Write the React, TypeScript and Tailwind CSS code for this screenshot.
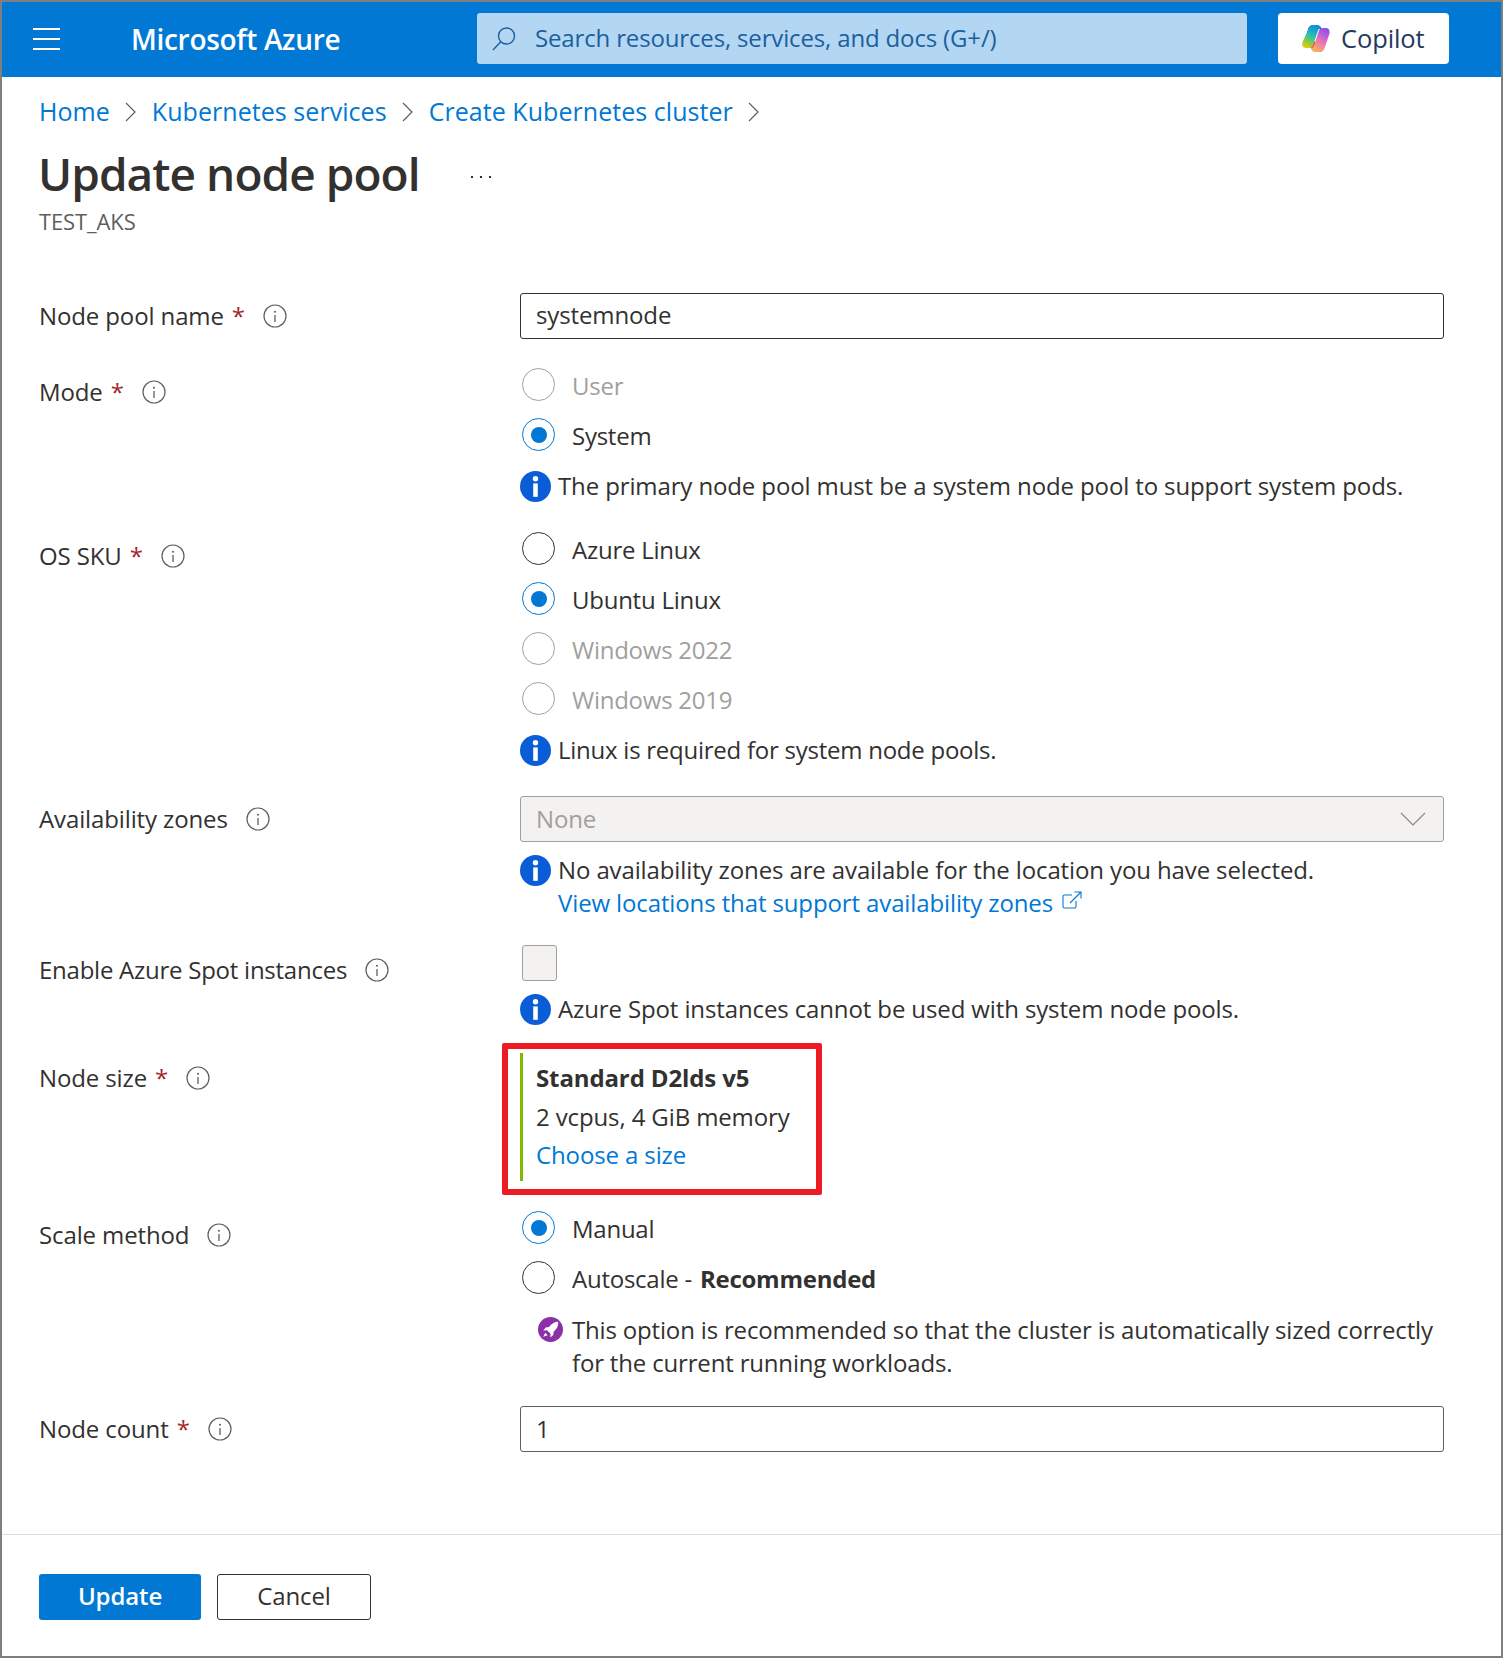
import type { ReactNode } from "react";

function Radio({ label, checked, disabled }: { label: ReactNode; checked?: boolean; disabled?: boolean }) {
  const ring = checked ? "border-[#0078d4]" : disabled ? "border-[#a19f9d]" : "border-[#323130]";
  return (
    <div className={`flex h-[50px] items-center tracking-[-0.25px] ${disabled ? "text-[#a19f9d]" : ""}`}>
      <span className={`ml-[2px] mb-[3px] flex h-[33px] w-[33px] items-center justify-center rounded-full border ${ring}`}>
        {checked && <span className="h-4 w-4 rounded-full bg-[#0078d4]" />}
      </span>
      <span className="ml-[17px]">{label}</span>
    </div>
  );
}

function InfoIcon() {
  return (
    <svg viewBox="0 0 30 30" className="h-[31px] w-[31px] shrink-0">
      <circle cx="15" cy="15" r="15" fill="#0b5cd7" />
      <circle cx="15" cy="7.500" r="2.600" fill="#fff" />
      <rect x="12.800" y="12" width="4.400" height="13" fill="#fff" />
    </svg>
  );
}

function InfoLine({ children }: { children: ReactNode }) {
  return (
    <div className="flex leading-[33px]">
      <span className="flex h-[33px] w-[38px] shrink-0 items-center">
        <InfoIcon />
      </span>
      <div className="-mt-px">{children}</div>
    </div>
  );
}

function Label({ text, required, className = "" }: { text: string; required?: boolean; className?: string }) {
  return (
    <div className={`flex h-[46px] items-center ${className}`}>
      <span>{text}</span>
      {required && <span className="ml-2 text-[#a4262c]">*</span>}
      <svg viewBox="0 0 24 24" className="ml-[18px] h-6 w-6 text-[#605e5c]" fill="none" stroke="currentColor">
        <circle cx="12" cy="12" r="11" strokeWidth="1.2" />
        <circle cx="12" cy="7.800" r="1" fill="currentColor" stroke="none" />
        <path d="M12 11v7" strokeWidth="1.3" />
      </svg>
    </div>
  );
}

function Chevron() {
  return (
    <svg viewBox="0 0 14 24" className="mx-[14px] h-6 w-[14px] text-[#605e5c]" fill="none" stroke="currentColor" strokeWidth="1.2">
      <path d="M2 3l9 9-9 9" />
    </svg>
  );
}

function CopilotLogo() {
  return (
    <svg viewBox="0 0 28 27" className="h-[27px] w-[28px]">
      <defs>
        <linearGradient id="cpA" x1="0.6" y1="0" x2="0.2" y2="1">
          <stop offset="0" stopColor="#0f8fe0" />
          <stop offset="0.45" stopColor="#2bc0b0" />
          <stop offset="0.75" stopColor="#8fce3a" />
          <stop offset="1" stopColor="#f2c811" />
        </linearGradient>
        <linearGradient id="cpB" x1="0.7" y1="0" x2="0.3" y2="1">
          <stop offset="0" stopColor="#8c4fe8" />
          <stop offset="0.5" stopColor="#e66fc0" />
          <stop offset="1" stopColor="#fbb25a" />
        </linearGradient>
      </defs>
      <path d="M8 21c1.500 3 3 6 6 6h3c3 0 4.500-1.500 5-4l-3 1c-3 .5-4-1-5-4l-2-5z" fill="#e8452f" />
      <path d="M20 5c-1-3-2.500-5-5.500-5h-3C8.500 0 7 1.500 6 4L4 14l8-2 2-7c.5-1 1.500-1.500 3-1.500z" fill="#1d4fc4" />
      <path d="M12 0C8.500 0 7 1.500 6 5L1 16c-2 4-.5 7 3 7h3c2.500 0 3.500-1 4.500-4l4-12c.8-2.500 1.800-4 3.500-4.500C18.500 1 16 0 14 0z" fill="url(#cpA)" />
      <path d="M17 27c3 0 5-1.500 6-5l4-12c1.500-4 0-7-3-7h-3c-2.500 0-3.500 1-4.500 4l-4 12c-.8 2.500-1.800 4-3.500 4.500 1 2.500 3 3.500 5 3.500z" fill="url(#cpB)" />
    </svg>
  );
}

export default function App() {
  return (
    <div className="h-[1658px] w-[1503px] border-2 border-[#7f7f7f] bg-white font-['Open_Sans',sans-serif] text-[24px] tracking-[-0.12px] text-[#323130]">
      {/* Top bar */}
      <header className="flex h-[75px] items-center bg-[#0078d4] pb-[2px]">
        <div className="ml-[31px] flex w-[27px] flex-col gap-2">
          <span className="h-[2px] bg-white" />
          <span className="h-[2px] bg-white" />
          <span className="h-[2px] bg-white" />
        </div>
        <span className="ml-[71px] w-[346px] text-[28px] font-semibold tracking-[-0.3px] text-white">Microsoft Azure</span>
        <div className="flex h-[51px] w-[770px] items-center rounded-[3px] bg-[#b3d6f2] tracking-[-0.15px] text-[#1b5f9e]">
          <svg viewBox="0 0 24 24" className="ml-[15px] h-6 w-6" fill="none" stroke="currentColor" strokeWidth="1.4">
            <circle cx="14.500" cy="9" r="8" />
            <path d="M8.800 14.800L1 23" />
          </svg>
          <span className="ml-[19px] pb-[2px]">Search resources, services, and docs (G+/)</span>
        </div>
        <div className="ml-[31px] flex h-[51px] w-[171px] items-center rounded-[4px] bg-white text-[#243a5e]">
          <span className="ml-6 flex">
            <CopilotLogo />
          </span>
          <span className="ml-[11px] text-[25.500px] font-medium">Copilot</span>
        </div>
      </header>

      {/* Breadcrumb and title */}
      <nav className="flex h-[70px] items-center pl-[37px] text-[25px] tracking-[0.05px] text-[#0078d4]">
        <span>Home</span>
        <Chevron />
        <span>Kubernetes services</span>
        <Chevron />
        <span>Create Kubernetes cluster</span>
        <Chevron />
      </nav>
      <div className="flex h-[56px] items-center pb-1 pl-[36px]">
        <h1 className="text-[46px] font-semibold tracking-[-0.95px]">Update node pool</h1>
        <div className="ml-[51px] mt-[8px] flex gap-[7px]">
          <span className="h-[2px] w-[2px] bg-[#323130]" />
          <span className="h-[2px] w-[2px] bg-[#323130]" />
          <span className="h-[2px] w-[2px] bg-[#323130]" />
        </div>
      </div>
      <div className="mt-[3px] pl-[37px] text-[22px] leading-[30px] text-[#605e5c]">TEST_AKS</div>

      {/* Form */}
      <div className="mt-[57px] grid grid-cols-[481px_924px] pl-[37px]">
        <Label text="Node pool name" required />
        <div className="flex h-[46px] items-center rounded-[3px] border border-[#323130] px-[15px] pb-[2px]">systemnode</div>

        <Label text="Mode" required className="mt-[30px]" />
        <div className="mt-[22px]">
          <Radio label="User" disabled />
          <Radio label="System" checked />
          <div className="mt-[9px]">
            <InfoLine>The primary node pool must be a system node pool to support system pods.</InfoLine>
          </div>
        </div>

        <Label text="OS SKU" required className="mt-[30px]" />
        <div className="mt-[22px]">
          <Radio label="Azure Linux" />
          <Radio label="Ubuntu Linux" checked />
          <Radio label="Windows 2022" disabled />
          <Radio label="Windows 2019" disabled />
          <div className="mt-[9px] tracking-[-0.25px]">
            <InfoLine>Linux is required for system node pools.</InfoLine>
          </div>
        </div>

        <Label text="Availability zones" className="mt-[29px]" />
        <div className="mt-[29px]">
          <div className="flex h-[46px] items-center justify-between rounded-[3px] border border-[#a19f9d] bg-[#f3f2f1] px-[15px] text-[#a19f9d]">
            None
            <svg viewBox="0 0 26 14" className="mr-[2px] h-[14px] w-[26px]" fill="none" stroke="#8a8886" strokeWidth="1.2">
              <path d="M1 1l12 12L25 1" />
            </svg>
          </div>
          <div className="mt-[12px]">
            <InfoLine>
              <div>No availability zones are available for the location you have selected.</div>
              <div className="flex items-center text-[#0078d4]">
                View locations that support availability zones
                <svg viewBox="0 0 20 20" className="mb-1 ml-[9px] h-5 w-5" fill="none" stroke="currentColor" strokeWidth="1.1">
                  <path d="M10 4H2.500a1.500 1.500 0 0 0-1.500 1.500v10A1.500 1.500 0 0 0 2.500 17h10a1.500 1.500 0 0 0 1.500-1.500V10" />
                  <path d="M8 12L19 1M12.500 1H19v6.500" />
                </svg>
              </div>
            </InfoLine>
          </div>
        </div>

        <Label text="Enable Azure Spot instances" className="mt-[28px] tracking-[-0.25px]" />
        <div className="mt-[26px]">
          <div className="ml-[2px] h-[36px] w-[35px] rounded-[3px] border border-[#a19f9d] bg-[#f3f2f1]" />
          <div className="mt-[12px]">
            <InfoLine>Azure Spot instances cannot be used with system node pools.</InfoLine>
          </div>
        </div>

        <Label text="Node size" required className="mt-[29px]" />
        <div className="mt-[27px]">
          <div className="relative h-[128px] w-fit border-l-[3px] border-[#7fba00] pl-[13px] pt-[6px] leading-[38.500px]">
            <div className="font-bold">Standard D2lds v5</div>
            <div>2 vcpus, 4 GiB memory</div>
            <div className="text-[#0078d4]">Choose a size</div>
            {/* red annotation drawn over the field */}
            <div className="absolute -left-[21px] -top-[10px] h-[152px] w-[320px] rounded-[2px] border-[6px] border-[#ed1c24]" />
          </div>
        </div>

        <Label text="Scale method" className="mt-[31px]" />
        <div className="mt-[23px]">
          <Radio label="Manual" checked />
          <Radio label={<>Autoscale - <b className="ml-[2px] font-bold">Recommended</b></>} />
          <div className="mt-[9px] flex pl-[18px] leading-[33px] tracking-[-0.17px]">
            <span className="flex h-[33px] w-[34px] shrink-0 items-center">
              <svg viewBox="0 0 26 26" className="h-[25px] w-[25px]">
                <circle cx="13" cy="13" r="13" fill="#8c2fa8" />
                <path d="M21 5c-4 0-7 2-9.500 5.500l-3.500.5-2.500 3 3.800-.2 3.700 3.700-.2 3.800 3-2.500.5-3.500C19 13 21.300 10 21 5z" fill="#fff" />
                <path d="M7.500 16.500l2.500 2.500-4.500 1.500z" fill="#fff" />
              </svg>
            </span>
            <div>
              This option is recommended so that the cluster is automatically sized correctly
              <br />
              for the current running workloads.
            </div>
          </div>
        </div>

        <Label text="Node count" required className="mt-[27px]" />
        <div className="mt-[27px] flex h-[46px] items-center rounded-[3px] border border-[#605e5c] px-[15px]">1</div>
      </div>

      {/* Footer */}
      <div className="mt-[82px] border-t border-[#dedede] pl-[37px] pt-[39px]">
        <div className="flex gap-4">
          <button className="h-[46px] w-[162px] rounded-[3px] bg-[#0078d4] pb-[3px] font-semibold text-white">Update</button>
          <button className="h-[46px] w-[154px] rounded-[3px] border border-[#323130] pb-[3px] font-medium">Cancel</button>
        </div>
      </div>
    </div>
  );
}
